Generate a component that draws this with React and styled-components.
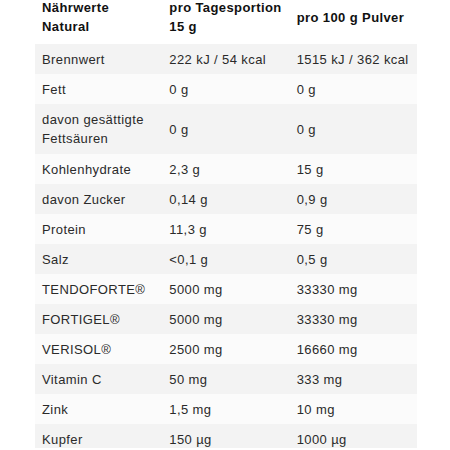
import React from 'react';
import styled, { createGlobalStyle } from 'styled-components';

const GlobalStyle = createGlobalStyle`
  body {
    margin: 0;
    background: #fff;
    font-family: "Liberation Sans", Arial, sans-serif;
  }
`;

const Wrapper = styled.div`
  width: 450px;
  height: 450px;
  overflow: hidden;
  padding: 0 33px 0 35px;
  box-sizing: border-box;
  margin-top: -2px;
`;

const Table = styled.table`
  width: 100%;
  border-collapse: collapse;
  table-layout: fixed;
  font-size: 13px;
  letter-spacing: 0.4px;
  color: #2a2a2a;
`;

const HeadCell = styled.th`
  text-align: left;
  vertical-align: middle;
  font-weight: bold;
  color: #111;
  line-height: 19px;
  padding: 0 7px 8px;
  letter-spacing: 0.4px;
  white-space: nowrap;
`;

const Row = styled.tr`
  background: ${p => (p.$odd ? '#f3f3f3' : '#fbfbfb')};
`;

const Cell = styled.td`
  padding: 0 7px;
  height: ${p => (p.$tall ? 50 : 30)}px;
  line-height: 19px;
  vertical-align: middle;
`;

const rows = [
  ['Brennwert', '222 kJ / 54 kcal', '1515 kJ / 362 kcal'],
  ['Fett', '0 g', '0 g'],
  ['davon gesättigte Fettsäuren', '0 g', '0 g', true],
  ['Kohlenhydrate', '2,3 g', '15 g'],
  ['davon Zucker', '0,14 g', '0,9 g'],
  ['Protein', '11,3 g', '75 g'],
  ['Salz', '<0,1 g', '0,5 g'],
  ['TENDOFORTE®', '5000 mg', '33330 mg'],
  ['FORTIGEL®', '5000 mg', '33330 mg'],
  ['VERISOL®', '2500 mg', '16660 mg'],
  ['Vitamin C', '50 mg', '333 mg'],
  ['Zink', '1,5 mg', '10 mg'],
  ['Kupfer', '150 µg', '1000 µg'],
];

export default function App() {
  return (
    <Wrapper>
      <GlobalStyle />
      <Table>
        <thead>
          <tr>
            <HeadCell>Nährwerte<br />Natural</HeadCell>
            <HeadCell>pro Tagesportion<br />15 g</HeadCell>
            <HeadCell>pro 100 g Pulver</HeadCell>
          </tr>
        </thead>
        <tbody>
          {rows.map((r, i) => (
            <Row key={r[0]} $odd={i % 2 === 0}>
              <Cell $tall={r[3]}>{r[0]}</Cell>
              <Cell $tall={r[3]}>{r[1]}</Cell>
              <Cell $tall={r[3]}>{r[2]}</Cell>
            </Row>
          ))}
        </tbody>
      </Table>
    </Wrapper>
  );
}
